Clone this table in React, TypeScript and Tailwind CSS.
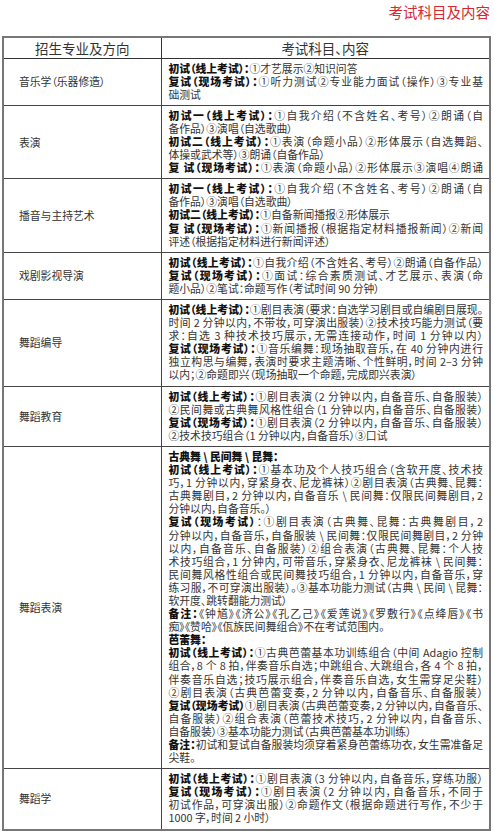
import clsx from "clsx";

type Line = { b?: string; t?: string; j?: boolean };
type Row = { name: string; lines: Line[] };

const rows: Row[] = [
  {
    name: "音乐学（乐器修造）",
    lines: [
      { b: "初试（线上考试）：", t: "①才艺展示②知识问答" },
      { b: "复试（现场考试）：", t: "①听力测试②专业能力面试（操作）③专业基", j: true },
      { t: "础测试" },
    ],
  },
  {
    name: "表演",
    lines: [
      { b: "初试一（线上考试）：", t: "①自我介绍（不含姓名、考号）②朗诵（自", j: true },
      { t: "备作品）③演唱（自选歌曲）" },
      { b: "初试二（线上考试）：", t: "①表演（命题小品）②形体展示（自选舞蹈、", j: true },
      { t: "体操或武术等）③朗诵（自备作品）" },
      { b: "复 试（现场考试）：", t: "①表演（命题小品）②形体展示③演唱④朗诵", j: true },
    ],
  },
  {
    name: "播音与主持艺术",
    lines: [
      { b: "初试一（线上考试）：", t: "①自我介绍（不含姓名、考号）②朗诵（自", j: true },
      { t: "备作品）③演唱（自选歌曲）" },
      { b: "初试二（线上考试）：", t: "①自备新闻播报②形体展示" },
      { b: "复 试（现场考试）：", t: "①新闻播报（根据指定材料播报新闻）②新闻", j: true },
      { t: "评述（根据指定材料进行新闻评述）" },
    ],
  },
  {
    name: "戏剧影视导演",
    lines: [
      { b: "初试（线上考试）：", t: "①自我介绍（不含姓名、考号）②朗诵（自备作品）", j: true },
      { b: "复试（现场考试）：", t: "①面试：综合素质测试、才艺展示、表演（命", j: true },
      { t: "题小品）②笔试：命题写作（考试时间 90 分钟）" },
    ],
  },
  {
    name: "舞蹈编导",
    lines: [
      { b: "初试（线上考试）：", t: "①剧目表演（要求：自选学习剧目或自编剧目展现。", j: true },
      { t: "时间 2 分钟以内，不带妆，可穿演出服装）②技术技巧能力测试（要", j: true },
      { t: "求：自选 3 种技术技巧展示，无需连接动作，时间 1 分钟以内）", j: true },
      { b: "复试（现场考试）：", t: "①音乐编舞：现场抽取音乐，在 40 分钟内进行", j: true },
      { t: "独立构思与编舞，表演时要求主题清晰、个性鲜明，时间 2–3 分钟", j: true },
      { t: "以内；②命题即兴（现场抽取一个命题，完成即兴表演）" },
    ],
  },
  {
    name: "舞蹈教育",
    lines: [
      { b: "初试（线上考试）：", t: "①剧目表演（2 分钟以内，自备音乐、自备服装）", j: true },
      { t: "②民间舞或古典舞风格性组合（1 分钟以内，自备音乐、自备服装）", j: true },
      { b: "复试（现场考试）：", t: "①剧目表演（2 分钟以内，自备音乐、自备服装）", j: true },
      { t: "②技术技巧组合（1 分钟以内，自备音乐）③口试" },
    ],
  },
  {
    name: "舞蹈表演",
    lines: [
      { b: "古典舞 \\ 民间舞 \\ 昆舞：" },
      { b: "初试（线上考试）：", t: "①基本功及个人技巧组合（含软开度、技术技", j: true },
      { t: "巧，1 分钟以内，穿紧身衣、尼龙裤袜）②剧目表演（古典舞、昆舞：", j: true },
      { t: "古典舞剧目，2 分钟以内，自备音乐 \\ 民间舞：仅限民间舞剧目，2", j: true },
      { t: "分钟以内，自备音乐。）" },
      { b: "复试（现场考试）", t: "：①剧目表演（古典舞、昆舞：古典舞剧目，2", j: true },
      { t: "分钟以内，自备音乐，自备服装 \\ 民间舞：仅限民间舞剧目，2 分钟", j: true },
      { t: "以内，自备音乐、自备服装）②组合表演（古典舞、昆舞：个人技", j: true },
      { t: "术技巧组合，1 分钟内，可带音乐，穿紧身衣、尼龙裤袜 \\ 民间舞：", j: true },
      { t: "民间舞风格性组合或民间舞技巧组合，1 分钟以内，自备音乐，穿", j: true },
      { t: "练习服，不可穿演出服装）。③基本功能力测试（古典 \\ 民间 \\ 昆舞：", j: true },
      { t: "软开度、跳转翻能力测试）" },
      { b: "备注：", t: "《钟馗》《济公》《孔乙己》《爱莲说》《罗敷行》《点绛唇》《书", j: true },
      { t: "痴》《赞哈》《佤族民间舞组合》不在考试范围内。" },
      { b: "芭蕾舞：" },
      { b: "初试（线上考试）：", t: "①古典芭蕾基本功训练组合（中间 Adagio 控制", j: true },
      { t: "组合，8 个 8 拍，伴奏音乐自选；中跳组合、大跳组合，各 4 个 8 拍，", j: true },
      { t: "伴奏音乐自选；技巧展示组合，伴奏音乐自选，女生需穿足尖鞋）", j: true },
      { t: "②剧目表演（古典芭蕾变奏，2 分钟以内，自备音乐、自备服装）", j: true },
      { b: "复试（现场考试）", t: "①剧目表演（古典芭蕾变奏，2 分钟以内，自备音乐、", j: true },
      { t: "自备服装）②组合表演（芭蕾技术技巧，2 分钟以内，自备音乐、", j: true },
      { t: "自备服装）③基本功能力测试（古典芭蕾基本功训练）" },
      { b: "备注：", t: "初试和复试自备服装均须穿着紧身芭蕾练功衣，女生需准备足", j: true },
      { t: "尖鞋。" },
    ],
  },
  {
    name: "舞蹈学",
    lines: [
      { b: "初试（线上考试）：", t: "①剧目表演（3 分钟以内，自备音乐，穿练功服）", j: true },
      { b: "复试（现场考试）：", t: "①剧目表演（2 分钟以内，自备音乐，不同于", j: true },
      { t: "初试作品，可穿演出服）②命题作文（根据命题进行写作，不少于", j: true },
      { t: "1000 字，时间 2 小时）" },
    ],
  },
];

const TextLine = ({ b, t, j }: Line) => (
  <div className={clsx("whitespace-nowrap", j && "text-justify [text-align-last:justify]")}>
    {b && <span className="font-black text-[#111]">{b}</span>}
    {t}
  </div>
);

export default function App() {
  return (
    <div className="w-[494px] bg-white font-['Noto_Sans_CJK_SC','Noto_Sans',sans-serif] text-[#333] [font-feature-settings:'palt']">
      <div className="flex h-[36px] justify-end pr-[4px] pt-[3px]">
        <h1 className="text-[14.5px] leading-[18px] text-[#d7282f]">考试科目及内容</h1>
      </div>
      <table className="ml-[2px] w-[489px] table-fixed border-collapse border-2 border-[#777]">
        <colgroup>
          <col className="w-[158px]" />
          <col />
        </colgroup>
        <thead>
          <tr className="h-[21px]">
            <th className="border border-[#333] text-[13.5px] leading-[18px] font-normal">招生专业及方向</th>
            <th className="border border-[#333] text-[13.5px] leading-[18px] font-normal">考试科目、内容</th>
          </tr>
        </thead>
        <tbody>
          {rows.map((row) => (
            <tr key={row.name}>
              <td className="border border-[#444] pl-[15px] align-middle text-[10.8px] leading-[13px]">{row.name}</td>
              <td className="border border-[#444] pl-[7px] pr-[6px] pt-[3px] pb-[4px] align-top text-[10.8px] leading-[13.1px]">
                {row.lines.map((line, i) => (
                  <TextLine key={i} {...line} />
                ))}
              </td>
            </tr>
          ))}
        </tbody>
      </table>
    </div>
  );
}
